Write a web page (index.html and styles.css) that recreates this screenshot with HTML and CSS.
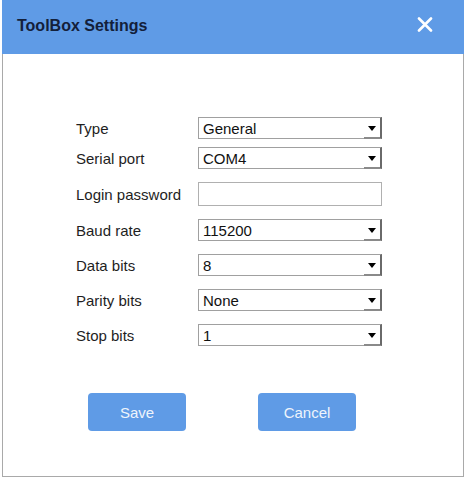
FILE: index.html
```html
<!DOCTYPE html>
<html>
<head>
<meta charset="utf-8">
<link rel="stylesheet" href="styles.css">
</head>
<body>
<div class="dialog">
  <div class="header">
    <span class="title">ToolBox Settings</span>
    <svg class="close" width="16" height="15" viewBox="0 0 16 15"><path d="M2 1.5 L14 13.5 M14 1.5 L2 13.5" stroke="#fff" stroke-width="2.6" stroke-linecap="round"/></svg>
  </div>
  <div class="body">
    <div class="form">
      <div class="row"><span class="label">Type</span><div class="select"><span class="val">General</span><span class="arrow"><svg width="8" height="5" viewBox="0 0 8 5"><path d="M0 0 H8 L4 5 Z" fill="#000"/></svg></span></div></div>
      <div class="row tight"><span class="label">Serial port</span><div class="select"><span class="val">COM4</span><span class="arrow"><svg width="8" height="5" viewBox="0 0 8 5"><path d="M0 0 H8 L4 5 Z" fill="#000"/></svg></span></div></div>
      <div class="row"><span class="label">Login password</span><div class="input"></div></div>
      <div class="row"><span class="label">Baud rate</span><div class="select"><span class="val">115200</span><span class="arrow"><svg width="8" height="5" viewBox="0 0 8 5"><path d="M0 0 H8 L4 5 Z" fill="#000"/></svg></span></div></div>
      <div class="row"><span class="label">Data bits</span><div class="select"><span class="val">8</span><span class="arrow"><svg width="8" height="5" viewBox="0 0 8 5"><path d="M0 0 H8 L4 5 Z" fill="#000"/></svg></span></div></div>
      <div class="row"><span class="label">Parity bits</span><div class="select"><span class="val">None</span><span class="arrow"><svg width="8" height="5" viewBox="0 0 8 5"><path d="M0 0 H8 L4 5 Z" fill="#000"/></svg></span></div></div>
      <div class="row"><span class="label">Stop bits</span><div class="select"><span class="val">1</span><span class="arrow"><svg width="8" height="5" viewBox="0 0 8 5"><path d="M0 0 H8 L4 5 Z" fill="#000"/></svg></span></div></div>
    </div>
    <div class="buttons">
      <button class="btn">Save</button>
      <button class="btn">Cancel</button>
    </div>
  </div>
</div>
</body>
</html>
```
FILE: styles.css
```css
html, body {
  margin: 0;
  padding: 0;
  background: #fff;
}
body {
  font-family: "Liberation Sans", Arial, sans-serif;
}
.dialog {
  margin-left: 2px;
  width: 462px;
  height: 477px;
  box-sizing: border-box;
  border: 1px solid #a9a9a9;
  border-top: none;
  display: flex;
  flex-direction: column;
}
.header {
  height: 54px;
  margin: 0 -1px;
  background: #5f9be6;
  display: flex;
  align-items: center;
  justify-content: space-between;
  padding: 0 31px 6px 15px;
  box-sizing: border-box;
}
.title {
  font-weight: bold;
  font-size: 16px;
  color: #13203a;
  padding-top: 4px;
}
.close {
  display: block;
}
.body {
  padding: 63px 0 0 73px;
}
.form {
  display: flex;
  flex-direction: column;
  gap: 13px;
}
.row {
  display: flex;
  align-items: center;
}
.row.tight {
  margin-top: -5px;
}
.label {
  width: 122px;
  font-size: 15px;
  color: #1e1e1e;
}
.select {
  width: 184px;
  height: 22px;
  box-sizing: border-box;
  border: 1px solid #a0a0a0;
  border-right: 2px solid #6a6a6a;
  display: flex;
  align-items: center;
  justify-content: space-between;
  background: #fff;
}
.val {
  padding-left: 4px;
  font-size: 15px;
  color: #111;
}
.arrow {
  align-self: stretch;
  width: 16px;
  box-sizing: border-box;
  border-bottom: 2px solid #8a8a8a;
  margin-bottom: -1px;
  display: flex;
  align-items: center;
  justify-content: center;
  padding-top: 1px;
}
.arrow svg {
  display: block;
}
.input {
  width: 184px;
  height: 24px;
  box-sizing: border-box;
  border: 1px solid #b0b0b0;
  background: #fff;
}
.buttons {
  display: flex;
  gap: 72px;
  margin-top: 47px;
  margin-left: 12px;
}
.btn {
  width: 98px;
  height: 38px;
  border: none;
  border-radius: 4px;
  background: #5f9be6;
  color: #eef4fc;
  font-family: "Liberation Sans", Arial, sans-serif;
  font-size: 15px;
  padding: 0;
}
```
